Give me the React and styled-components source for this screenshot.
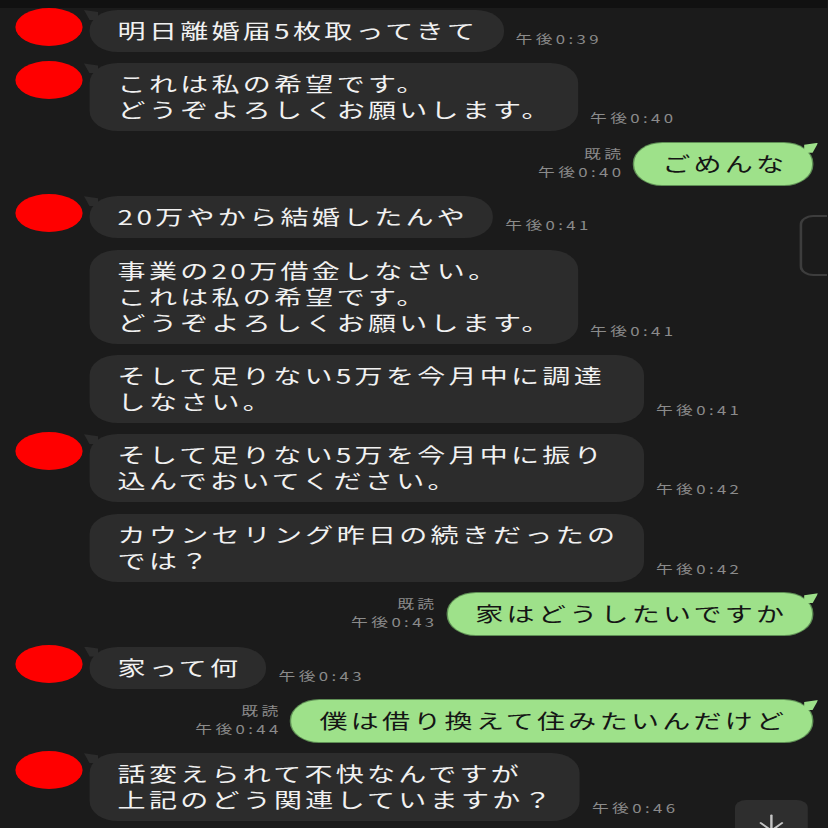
import React from 'react';
import styled, { createGlobalStyle } from 'styled-components';
import { ArrowDown } from 'lucide-react';

// the reference is a phone screenshot stretched sideways, so the chat is
// laid out at its natural width and widened by STRETCH
const STRETCH = 1.4;

const GlobalStyle = createGlobalStyle`
  html, body {
    margin: 0;
    padding: 0;
    background: #1b1b1b;
    overflow: hidden;
  }
  body {
    font-family: "Noto Sans CJK JP", "Noto Sans", sans-serif;
  }
`;

const Screen = styled.div`
  position: relative;
  width: ${828 / STRETCH}px;
  height: 828px;
  overflow: hidden;
  background: #1b1b1b;
  transform: scaleX(${STRETCH});
  transform-origin: top left;
`;

const TopStrip = styled.div`
  height: 8px;
  background: #111111;
`;

const Thread = styled.div`
  display: flex;
  flex-direction: column;
  gap: 11.4px;
  padding: 2px 11px 0 11px;
`;

const Row = styled.div`
  display: flex;
  align-items: flex-end;
  justify-content: ${(p) => (p.$mine ? 'flex-end' : 'flex-start')};
`;

const AvatarSlot = styled.div`
  align-self: flex-start;
  width: 53px;
  flex: none;
  margin-top: -2px;
`;

const Avatar = styled.div`
  width: 48px;
  height: 38px;
  border-radius: 50%;
  background: #ff0000;
`;

const Bubble = styled.div`
  position: relative;
  flex: none;
  box-sizing: border-box;
  width: ${(p) => (p.$full ? '396px' : 'auto')};
  padding: 8px 18px 8px 20px;
  border-radius: 20px;
  background: ${(p) => (p.$mine ? '#9ee18a' : '#2c2c2c')};
  color: ${(p) => (p.$mine ? '#151515' : '#f1f1f1')};
  font-size: 20px;
  line-height: 26px;
  letter-spacing: 2.35px;
  white-space: pre;
  box-shadow: ${(p) => (p.$mine ? '0 0 0 1px #5f8f55' : 'none')};

  &::before {
    content: '';
    display: ${(p) => (p.$tail ? 'block' : 'none')};
    position: absolute;
    top: 0;
    width: 10px;
    height: 10px;
    background: inherit;
    ${(p) =>
      p.$mine
        ? 'right: -4px; clip-path: polygon(100% 0, 0 20%, 0 100%, 60% 100%);'
        : 'left: -4px; clip-path: polygon(0 0, 100% 20%, 100% 100%, 40% 100%);'}
  }
`;

const Meta = styled.div`
  display: flex;
  flex-direction: column;
  align-items: ${(p) => (p.$mine ? 'flex-end' : 'flex-start')};
  margin: ${(p) => (p.$mine ? '0 7px 0 0' : '0 0 0 8.5px')};
  padding-bottom: 4px;
  color: #8b8b8b;
  font-size: 12px;
  line-height: 18px;
  letter-spacing: 2.4px;
  white-space: nowrap;
`;

const ScrollHandle = styled.div`
  position: absolute;
  right: 0;
  top: 215px;
  width: 18px;
  height: 57px;
  border: 2px solid #3d3d3d;
  border-right: none;
  border-radius: 10px 0 0 10px;
`;

const DownButton = styled.div`
  position: absolute;
  left: 525px;
  top: 800px;
  width: 52px;
  height: 48px;
  border-radius: 8px;
  background: #2e2e2e;
  display: flex;
  justify-content: center;
  padding-top: 10px;
  box-sizing: border-box;
  color: #c4c4c4;
`;

const messages = [
  { avatar: true, text: '明日離婚届5枚取ってきて', time: '午後0:39' },
  { avatar: true, text: 'これは私の希望です。\nどうぞよろしくお願いします。', time: '午後0:40' },
  { mine: true, text: 'ごめんな', time: '午後0:40' },
  { avatar: true, text: '20万やから結婚したんや', time: '午後0:41' },
  { text: '事業の20万借金しなさい。\nこれは私の希望です。\nどうぞよろしくお願いします。', time: '午後0:41' },
  { full: true, text: 'そして足りない5万を今月中に調達\nしなさい。', time: '午後0:41' },
  { avatar: true, full: true, text: 'そして足りない5万を今月中に振り\n込んでおいてください。', time: '午後0:42' },
  { full: true, text: 'カウンセリング昨日の続きだったの\nでは？', time: '午後0:42' },
  { mine: true, text: '家はどうしたいですか', time: '午後0:43' },
  { avatar: true, text: '家って何', time: '午後0:43' },
  { mine: true, text: '僕は借り換えて住みたいんだけど', time: '午後0:44' },
  { avatar: true, text: '話変えられて不快なんですが\n上記のどう関連していますか？', time: '午後0:46' },
];

function Message({ m }) {
  if (m.mine) {
    return (
      <Row $mine>
        <Meta $mine>
          <span>既読</span>
          <span>{m.time}</span>
        </Meta>
        <Bubble $mine $tail>{m.text}</Bubble>
      </Row>
    );
  }
  return (
    <Row>
      <AvatarSlot>{m.avatar && <Avatar />}</AvatarSlot>
      <Bubble $tail={m.avatar} $full={m.full}>{m.text}</Bubble>
      <Meta>
        <span>{m.time}</span>
      </Meta>
    </Row>
  );
}

export default function App() {
  return (
    <>
      <GlobalStyle />
      <Screen>
        <TopStrip />
        <Thread>
          {messages.map((m, i) => (
            <Message key={i} m={m} />
          ))}
        </Thread>
        <ScrollHandle />
        <DownButton>
          <ArrowDown size={26} strokeWidth={1.6} />
        </DownButton>
      </Screen>
    </>
  );
}
